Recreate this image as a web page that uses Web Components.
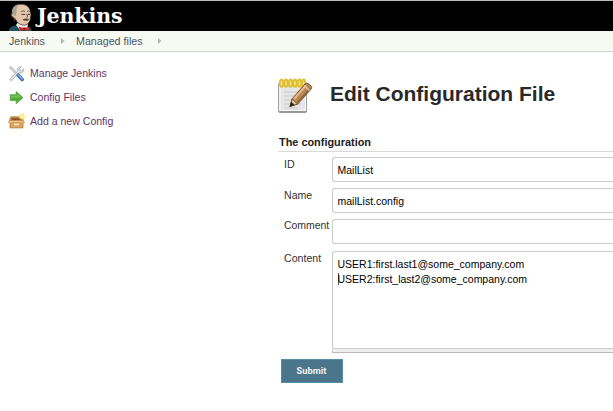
<!DOCTYPE html>
<html lang="en"><head><meta charset="utf-8"><title>Edit Configuration File</title>
<style>
html,body{margin:0;height:411px;overflow:hidden;background:#fff}
body{font:10.6px/14px "Liberation Sans",Arial,sans-serif;color:#333}
</style></head><body>
<jenkins-page></jenkins-page>
<script>
const define = (name, html) => {
  const t = document.createElement('template');
  t.innerHTML = html;
  customElements.define(name, class extends HTMLElement {
    constructor() {
      super();
      this.attachShadow({ mode: 'open' }).append(t.content.cloneNode(true));
    }
  });
};

define('app-header', `
<style>
:host{display:flex;box-sizing:border-box;height:31px;background:#000;border-top:1px solid #b9bcbc;padding-left:8px;align-items:flex-start}
svg{display:block;width:26px;height:30px}
b{font:bold 20.5px/30px "DejaVu Serif",Georgia,serif;color:#fff;margin-left:3px;white-space:nowrap;letter-spacing:-.1px}
</style>
<svg viewBox="0 1 26 30">
<path d="M1 31V29L4 26.5 9 25 22 27 24 31Z" fill="#274e60"/>
<path d="M8 25L11 21 20 24 19 30H12Z" fill="#eee9e2"/>
<path d="M4.3 17C2.8 16 3 13.5 4.2 13 3.3 8 7 4.2 13 4.2 19 4 22.5 8 22.5 13 23.6 15 22.5 16.5 22.4 18 22.3 22.5 19 25.5 15 25 11 24.6 8.5 22 7.5 19Z" fill="#e3c6ab" stroke="#3c302b" stroke-width=".7"/>
<path d="M4.4 13C3.8 8 6.5 5 11 4.6 8.8 7 8.4 9 8.6 12L7.4 16.5 5.6 15Z" fill="#a9a196"/>
<path d="M4.5 13.3C3 14 3.4 16.6 5.7 17.4L7 21" fill="none" stroke="#62483a"/>
<path d="M12.8 11.6Q15 10 17 11.6M19 11.4Q21 10.4 22 11.7" fill="none" stroke="#75614e"/>
<path d="M13.4 14.4H17M19.8 14.4H22M18.5 14Q20.7 17 18.5 17.6" fill="none" stroke="#4c3930"/>
<path d="M14.6 19.4Q18 17.6 21.2 19.2L19.7 20.8 15.5 20.6Z" fill="#514239"/>
<path d="M11 26.8L16 28 20.6 27.1 21 31 16.4 29.8 11.4 31Z" fill="#d8272b"/><circle cx="16.2" cy="28.8" r="1.3" fill="#8f1519"/>
</svg><b>Jenkins</b>`);

define('bread-crumbs', `
<style>
:host{display:flex;box-sizing:border-box;height:21px;background:#f6faf2;border-bottom:1px solid #d3d7cf;padding-left:9px;align-items:center;color:#4d545d}
span{white-space:nowrap}
.a{width:52px;font-size:10.6px}.b{font-size:10.7px;width:67px;margin-left:11px}
svg{width:4px;height:6px;display:block}.l{margin-left:15px}
</style>
<span class="a">Jenkins</span><svg viewBox="0 0 4 6"><path d="M0 0L3.5 3 0 6Z" fill="#b4b6b2"/></svg>
<span class="b">Managed files</span><svg class="l" viewBox="0 0 4 6"><path d="M0 0L3.5 3 0 6Z" fill="#b4b6b2"/></svg>`);

define('task-link', `
<style>
:host{display:flex;align-items:center;height:24px;gap:5px;color:#5c3566;font-size:10.55px;white-space:nowrap}
::slotted(svg){width:17px;height:17px;display:block}
</style><slot name="icon"></slot><span><slot></slot></span>`);

define('side-panel', `
<style>:host{display:block;padding:9px 0 0 8px;width:270px;box-sizing:border-box}</style>
<task-link><svg slot="icon" viewBox="0 0 17 17">
<path d="M1.6 2L3.4 1.8 9.6 8.6 8.6 9.8 2.2 3.8Z" fill="#d6d8d6" stroke="#a3a6a4" stroke-width=".7"/>
<path d="M1.5 14.2L9.4 6.4C8.7 3.6 10.8 1.2 13.4 1.7L11.5 3.8 12.2 5.2 13.8 5.8 15.7 4C16 6.7 13.7 8.7 11 8L3.1 15.8Z" fill="#dfe1df" stroke="#a0a4a3" stroke-width=".8"/>
<path d="M10.2 10.2L14.2 14.4" stroke="#3a6eb0" stroke-width="3.6" stroke-linecap="round"/><path d="M10.3 9.9L14.2 14" stroke="#8ab2df" stroke-width="1.4" stroke-linecap="round"/>
</svg>Manage Jenkins</task-link>
<task-link><svg slot="icon" viewBox="0 0 17 17">
<path d="M2.2 5.7H8.2V2.6L15 8.7 8.2 14.8V11.6H2.2Z" fill="#53ae38" stroke="#58a045" stroke-width=".8" stroke-linejoin="round"/>
<path d="M3 6.6H9V4.5L13.4 8.4H3Z" fill="#86ce64" opacity=".6"/>
</svg>Config Files</task-link>
<task-link><svg slot="icon" viewBox="0 0 17 17">
<path d="M2 8H15V14.9H2Z" fill="#dca65e" stroke="#ae7a3a" stroke-width=".8"/>
<path d="M2.8 3.8H14L15.4 7.9H1.4Z" fill="#c58d48" stroke="#ae7a3a" stroke-width=".7"/>
<path d="M4 5.2H13L13.6 7.4H3.3Z" fill="#855426"/>
<path d="M1.2 7.5H15.8L16.4 9.7H.4Z" fill="#eec286" stroke="#ba864a" stroke-width=".5"/>
<path d="M6 10.6H11V12.3H6Z" fill="#fae7bf"/>
<circle cx="13.8" cy="3.6" r="2.9" fill="#fae65c" opacity=".85"/><circle cx="13.8" cy="3.6" r="1.3" fill="#fffcc8"/>
</svg>Add a new Config</task-link>`);

define('page-title', `
<style>
:host{display:flex;height:36px;align-items:center}
svg{display:block;width:36px;height:36px}
h1{margin:-4px 0 0 16px;font:bold 21px/28px "Liberation Sans",Arial,sans-serif;color:#292929;white-space:nowrap}
</style>
<svg viewBox="0 0 36 36">
<path d="M1.5 5H28.5V33.2Q28.5 34.3 27.4 34.3H1.5Q.5 34.3.5 33.2V6Z" fill="#e6e7e6" stroke="#a0a2a0"/>
<path d="M2 6H27.5V32.8H2Z" fill="none" stroke="#f8f8f8"/>
<path d="M6 14H22M6 18H21M6 22H20M6 26H23M6 30H20" stroke="#c6c7c6"/>
<path d="M1 33.9H28.5" stroke="#858785" stroke-width="1.4"/>
<g fill="#f6e27c" stroke="#dfbd35" stroke-width="1.8"><ellipse cx="3.5" cy="5.2" rx="1.8" ry="3.7"/><ellipse cx="8" cy="5.2" rx="1.8" ry="3.7"/><ellipse cx="12.5" cy="5.2" rx="1.8" ry="3.7"/><ellipse cx="17" cy="5.2" rx="1.8" ry="3.7"/><ellipse cx="21.5" cy="5.2" rx="1.8" ry="3.7"/><ellipse cx="25.6" cy="5.2" rx="1.6" ry="3.7"/></g>
<path d="M14 21L27 6Q28.6 4.6 30.8 6L33 8Q34.3 9.4 32.9 11.3L19.8 26 12.2 28.4Z" fill="#b98752" stroke="#76502c"/>
<path d="M16 21L28 7.6" stroke="#dfb885" stroke-width="2.2"/><path d="M19.5 24.4L32 10.5" stroke="#916238" stroke-width="1.5"/>
<path d="M26 7.4L31.5 12.6" stroke="#dcc8af" stroke-width="1.4"/>
<path d="M14 21L19.5 26 12.2 28.4Z" fill="#dfc7a5" stroke="#66451f" stroke-width=".7"/><path d="M13.4 23.7L16.6 27 11.2 28.9Z" fill="#2b2925"/>
</svg><h1>Edit Configuration File</h1>`);

define('field-row', `
<style>
:host{display:grid;grid-template-columns:48px 1fr;height:var(--h,25px);margin-bottom:6px}
label{font-size:var(--label,10.6px);line-height:14px;white-space:nowrap}
.box{box-sizing:border-box;border:1px solid #ccc;border-right:0;border-radius:3px 0 0 3px;padding:5px 0 0 4.5px;font-size:10.5px;line-height:15px;color:#000;white-space:pre;background:#fff}
</style>
<label><slot name="label"></slot></label><div class="box"><slot></slot></div>`);

define('resize-strip', `
<style>:host{display:block;box-sizing:border-box;height:4px;margin-left:48px;background:#efefef;border-left:1px solid #ccc;border-bottom:1px solid #bbb}</style>`);

define('submit-button', `
<style>
:host{display:flex;margin:6px 0 0 -3.5px;width:62px;height:24px}
button{flex:1;border:1px solid #5590a8;background:#4b758b;color:#f1f5f7;padding:0;font:bold 9.2px/22px Roboto,sans-serif;letter-spacing:.05px}
</style><button><slot></slot></button>`);

define('config-form', `
<style>
:host{display:block;padding:26px 0 0 8px;flex:1;min-width:0}
h2{margin:21px 0 5px;height:17px;box-sizing:border-box;border-bottom:1px solid #d9d9d9;font:bold 10.9px/14px "Liberation Sans",Arial,sans-serif;color:#222;padding-left:1px}
.rows{padding-left:6px}
.cm{--label:10.45px;margin-bottom:7px}
.ta{--h:98px;margin-bottom:0}
.caret{display:inline-block;width:1px;height:12px;margin:0 -1px 0 0;background:#555;vertical-align:-2px}
</style>
<page-title></page-title>
<h2>The configuration</h2>
<div class="rows">
<field-row><span slot="label">ID</span>MailList</field-row>
<field-row><span slot="label">Name</span>mailList.config</field-row>
<field-row class="cm"><span slot="label">Comment</span></field-row>
<field-row class="ta"><span slot="label">Content</span><div>USER1:first.last1@some_company.com</div><div><i class="caret"></i>USER2:first_last2@some_company.com</div></field-row>
<resize-strip></resize-strip>
<submit-button>Submit</submit-button>
</div>`);

define('jenkins-page', `
<style>:host{display:block}main{display:flex}</style>
<app-header></app-header><bread-crumbs></bread-crumbs>
<main><side-panel></side-panel><config-form></config-form></main>`);
</script></body></html>
